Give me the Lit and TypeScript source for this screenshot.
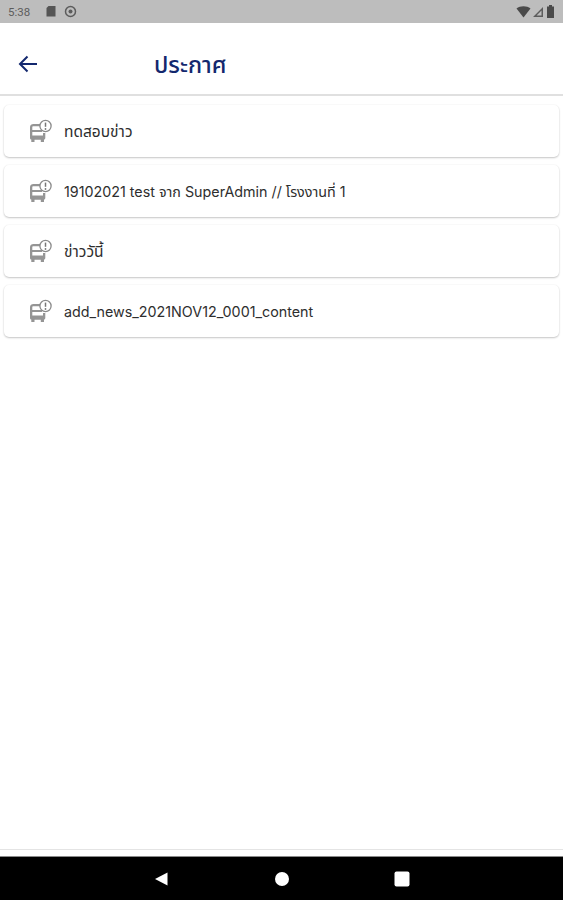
import { LitElement, html, css, svg } from 'lit';
import { customElement } from 'lit/decorators.js';

const NEWS = [
  { text: 'ทดสอบข่าว', thai: true },
  { text: '19102021 test จาก SuperAdmin // โรงงานที่ 1', thai: true },
  { text: 'ข่าววันี้', thai: true },
  { text: 'add_news_2021NOV12_0001_content', thai: false },
];

const busIcon = svg`
  <path d="M2 8c0-2 1.500-3 3.500-3H13v2.200H5.500c-.8 0-1.200.4-1.200 1V11H14v2H4.300v3.500H15V14h2.300v5c0 .9-.5 1.500-1.300 1.600V23h-3.200v-2.300H6.500V23H3.300v-2.400C2.500 20.500 2 19.900 2 19z" fill="#959595"/>
  <circle cx="6.500" cy="18.200" r="1.200" fill="#959595"/>
  <circle cx="13" cy="18.200" r="1.200" fill="#959595"/>
  <circle cx="17.500" cy="7" r="5.600" fill="#fff" stroke="#8a8a8a" stroke-width="1.300"/>
  <path d="M17.500 3.600v4.200" stroke="#777" stroke-width="1.500"/>
  <circle cx="17.500" cy="10" r=".9" fill="#777"/>
`;

@customElement('app-root')
class AppRoot extends LitElement {
  static styles = css`
    :host {
      display: flex;
      flex-direction: column;
      height: 900px;
      background: #fff;
      font-family: Inter, 'Noto Sans Thai', 'Noto Sans', sans-serif;
      overflow: hidden;
    }

    .status {
      display: flex;
      align-items: center;
      height: 23px;
      padding: 0 7px 0 8px;
      background: #bdbdbd;
      color: #5c5c5c;
      flex: none;
    }

    .time {
      font-family: Roboto, sans-serif;
      font-size: 11.5px;
      width: 38px;
    }

    .status svg {
      display: block;
    }

    .status .spacer {
      flex: 1;
    }

    .status-left {
      display: flex;
      gap: 8px;
    }

    .status-right {
      display: flex;
      gap: 1px;
      align-items: center;
    }

    .bar {
      display: flex;
      align-items: center;
      box-sizing: border-box;
      height: 73px;
      padding-top: 10px;
      border-bottom: 2px solid #e0e0e0;
      flex: none;
    }

    .back {
      display: block;
      margin-left: 17px;
      flex: none;
    }

    .title {
      margin-left: 115px;
      padding-top: 4px;
      font-family: 'Noto Sans Thai', 'Noto Sans', sans-serif;
      font-size: 23.300px;
      color: #13286e;
      font-weight: 500;
      line-height: 30px;
    }

    .list {
      flex: 1;
      display: flex;
      flex-direction: column;
      gap: 8px;
      padding: 9px 4px 0;
    }

    .card {
      display: flex;
      align-items: center;
      height: 52px;
      border-radius: 5px;
      background: #fff;
      box-shadow: 0 1px 2px rgba(0, 0, 0, 0.22), 0 0 2px rgba(0, 0, 0, 0.06);
      font-size: 14.300px;
      color: #2e2e2e;
    }

    .card svg {
      display: block;
      margin-left: 24px;
      flex: none;
    }

    .card span {
      margin-left: 12px;
      padding-top: 1px;
    }

    .card span.thai {
      padding-top: 3px;
    }

    .card span.short {
      font-size: 15.500px;
    }

    .foot {
      height: 6px;
      border-top: 1px solid #e4e4e4;
      flex: none;
    }

    .nav {
      display: flex;
      align-items: center;
      gap: 104.500px;
      height: 44px;
      padding-left: 153px;
      background: #000;
      border-top: 1px solid #8a8a8a;
      box-sizing: border-box;
      flex: none;
    }

    .nav svg {
      display: block;
    }
  `;

  render() {
    return html`
      <div class="status">
        <span class="time">5:38</span>
        <div class="status-left">
          <svg width="10" height="12" viewBox="0 0 10 12"><path d="M2.500 1H9.500V11.500H.5V3z" fill="#555"/></svg>
          <svg width="13" height="13" viewBox="0 0 13 13"><circle cx="6.500" cy="6.500" r="5" fill="none" stroke="#5c5c5c" stroke-width="1.500"/><circle cx="6.500" cy="6.500" r="2" fill="#5c5c5c"/></svg>
        </div>
        <div class="spacer"></div>
        <div class="status-right">
          <svg width="15" height="12" viewBox="0 0 15 12"><path d="M.5 2.500C4 -.5 11 -.5 14.500 2.500L7.500 11.500z" fill="#4a4a4a"/></svg>
          <svg width="12" height="12" viewBox="0 0 12 12"><path d="M11 1V11H1zM9.500 4.500L4.500 9.500H9.500z" fill="#5c5c5c" fill-rule="evenodd"/></svg>
          <svg width="11" height="13" viewBox="0 0 11 13"><path d="M4 0H7V1.500H9V13H2V1.500H4z" fill="#4a4a4a"/></svg>
        </div>
      </div>
      <div class="bar">
        <svg class="back" width="22" height="22" viewBox="0 0 22 22" fill="none" stroke="#13286e" stroke-width="2">
          <path d="M20 11H3M10.500 3.500L3 11l7.500 7.500"/>
        </svg>
        <span class="title">ประกาศ</span>
      </div>
      <div class="list">
        ${NEWS.map(
          (item) => html`<div class="card">
            <svg width="24" height="24" viewBox="0 0 24 24">${busIcon}</svg>
            <span class="${item.thai ? 'thai' : ''} ${item.text.length < 12 ? 'short' : ''}">${item.text}</span>
          </div>`
        )}
      </div>
      <div class="foot"></div>
      <div class="nav">
        <svg width="16" height="16" viewBox="0 0 16 16"><path d="M14.500 1.500V14.500L2 8z" fill="#fff"/></svg>
        <svg width="16" height="16" viewBox="0 0 16 16"><circle cx="8" cy="8" r="7" fill="#fff"/></svg>
        <svg width="16" height="16" viewBox="0 0 16 16"><rect x=".5" y=".5" width="15" height="15" rx="2" fill="#fff"/></svg>
      </div>
    `;
  }
}
